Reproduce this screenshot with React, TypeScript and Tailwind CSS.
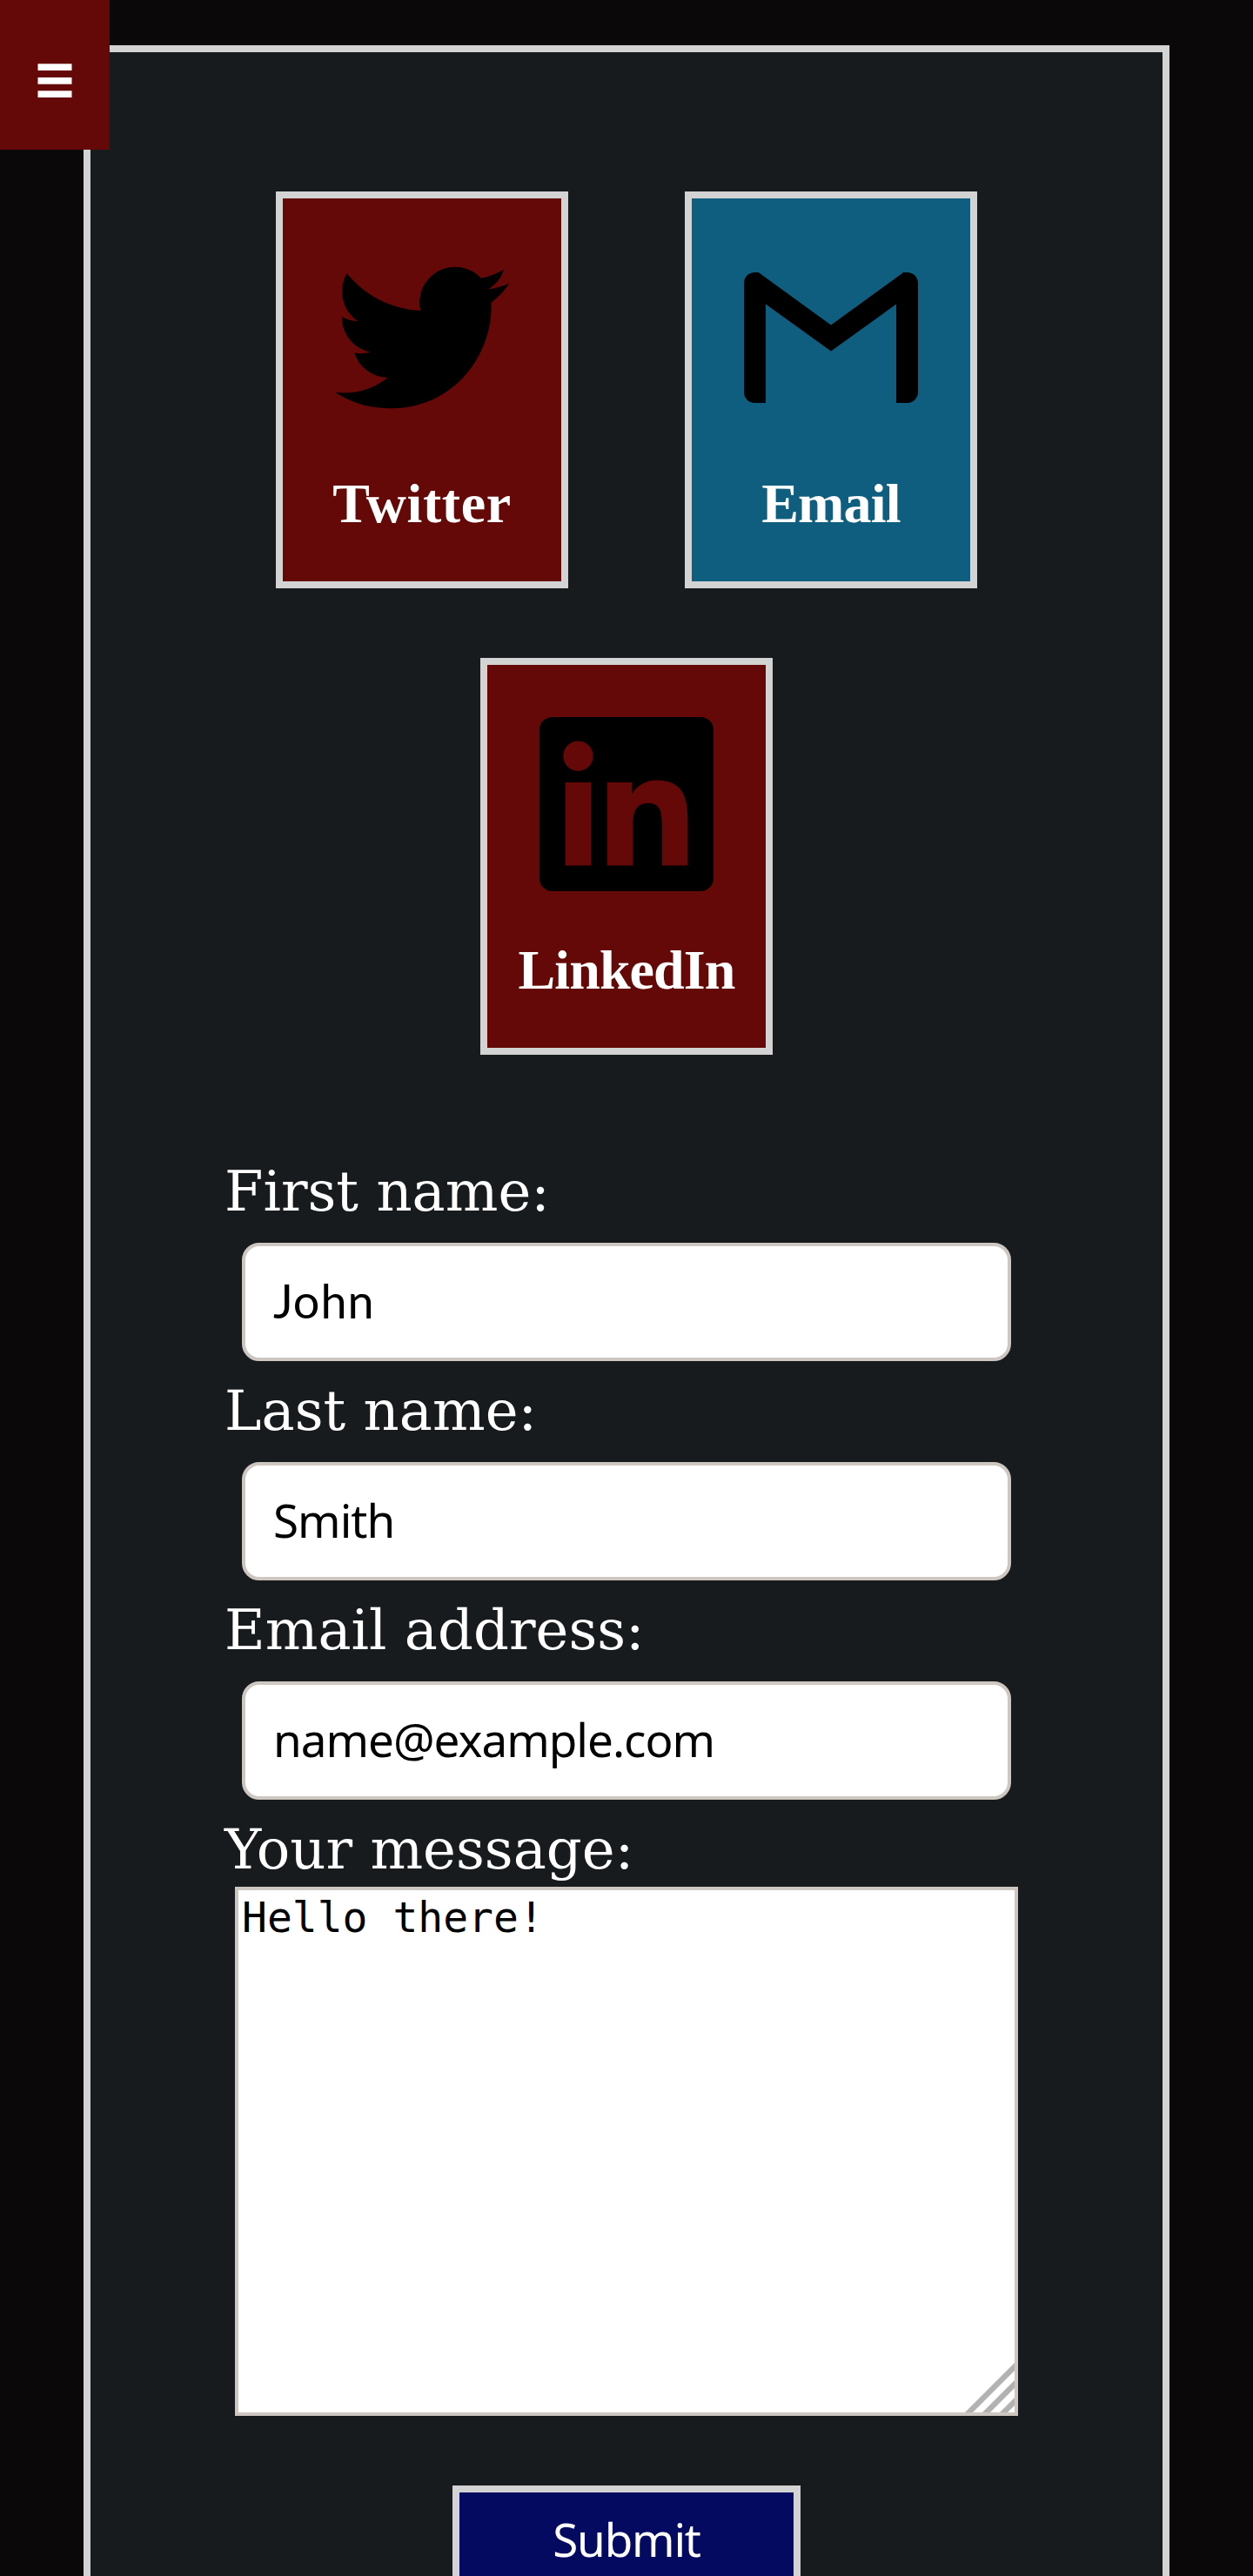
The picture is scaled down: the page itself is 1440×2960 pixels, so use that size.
const TWITTER =
  "M23.953 4.57a10 10 0 01-2.825.775 4.958 4.958 0 002.163-2.723c-.951.555-2.005.959-3.127 1.184a4.92 4.92 0 00-8.384 4.482C7.69 8.095 4.067 6.13 1.64 3.162a4.822 4.822 0 00-.666 2.475c0 1.71.87 3.213 2.188 4.096a4.904 4.904 0 01-2.228-.616v.06a4.923 4.923 0 003.946 4.827 4.996 4.996 0 01-2.212.085 4.936 4.936 0 004.604 3.417 9.867 9.867 0 01-6.102 2.105c-.39 0-.779-.023-1.17-.067a13.995 13.995 0 007.557 2.209c9.053 0 13.998-7.496 13.998-13.985 0-.21 0-.42-.015-.63A9.935 9.935 0 0024 4.59z";
const GMAIL =
  "M24 4.5v15c0 .85-.65 1.5-1.5 1.5H21V7.387l-9 6.463-9-6.463V21H1.5C.649 21 0 20.35 0 19.5v-15c0-.425.162-.8.431-1.068C.7 3.16 1.076 3 1.5 3H2l10 7.25L22 3h.5c.425 0 .8.162 1.069.432.27.268.431.643.431 1.068z";
const LINKEDIN =
  "M20.447 20.452h-3.554v-5.569c0-1.328-.027-3.037-1.852-3.037-1.853 0-2.136 1.445-2.136 2.939v5.667H9.351V9h3.414v1.561h.046c.477-.9 1.637-1.85 3.37-1.85 3.601 0 4.267 2.37 4.267 5.455v6.286zM5.337 7.433c-1.144 0-2.063-.926-2.063-2.065 0-1.138.92-2.063 2.063-2.063 1.14 0 2.064.925 2.064 2.063 0 1.139-.925 2.065-2.064 2.065zm1.782 13.019H3.555V9h3.564v11.452zM22.225 0H1.771C.792 0 0 .774 0 1.729v20.542C0 23.227.792 24 1.771 24h20.451C23.2 24 24 23.227 24 22.271V1.729C24 .774 23.2 0 22.222 0h.003z";

type CardProps = { label: string; path: string; tone: string; tracking: string };

function ContactCard({ label, path, tone, tracking }: CardProps) {
  return (
    <a
      href="#"
      className={`flex h-[456px] w-[336px] flex-col items-center border-8 border-[#d3d3d3] pt-[60px] ${tone}`}
    >
      <svg viewBox="0 0 24 24" className="size-[200px] shrink-0 fill-black">
        <path d={path} />
      </svg>
      <span
        className={`mt-[54px] font-['Liberation_Serif',serif] text-[64px] leading-[74px] font-bold whitespace-nowrap text-white ${tracking}`}
      >
        {label}
      </span>
    </a>
  );
}

type FieldProps = { label: string; value: string; type: string; face: string };

function Field({ label, value, type, face }: FieldProps) {
  return (
    <label className="flex h-[252px] flex-col">
      <span className="h-[74px] font-['DejaVu_Serif',serif] text-[64px] leading-[74px] whitespace-nowrap text-white">
        {label}
      </span>
      <input
        type={type}
        defaultValue={value}
        className={`mt-[22px] ml-5 h-[136px] w-[884px] rounded-[20px] border-4 border-[#cec7c1] bg-white px-8 pb-[3px] text-black outline-none ${face}`}
      />
    </label>
  );
}

export default function App() {
  return (
    <div className="relative h-[2960px] w-[1440px] overflow-hidden bg-[#0a0809] px-24 pt-[52px]">
      <button
        aria-label="Menu"
        className="absolute top-0 left-0 z-10 h-[172px] w-[126px] bg-[#640808]"
      >
        <svg viewBox="0 0 126 172" className="size-full fill-white">
          <rect x="43.5" y="73.3" width="39" height="7.7" />
          <rect x="43.5" y="89" width="39" height="7.7" />
          <rect x="43.5" y="104.3" width="39" height="7.7" />
        </svg>
      </button>

      <main className="h-[3100px] border-8 border-[#d3d3d3] bg-[#171b1d] pt-40">
        <div className="flex flex-wrap justify-center gap-x-[134px] gap-y-20 px-40">
          <ContactCard label="Twitter" path={TWITTER} tone="bg-[#640808]" tracking="tracking-[0.6px]" />
          <ContactCard label="Email" path={GMAIL} tone="bg-[#105e7f]" tracking="tracking-[-0.8px]" />
          <ContactCard label="LinkedIn" path={LINKEDIN} tone="bg-[#640808]" tracking="tracking-[-0.9px]" />
        </div>

        <form className="mt-[120px] ml-[154px] flex w-[924px] flex-col">
          <Field
            label="First name:"
            value="John"
            type="text"
            face="font-['Lato',sans-serif] text-[54px] tracking-[1px]"
          />
          <Field
            label="Last name:"
            value="Smith"
            type="text"
            face="font-['Noto_Sans',sans-serif] text-[53px] tracking-[-1px]"
          />
          <Field
            label="Email address:"
            value="name@example.com"
            type="email"
            face="font-['Noto_Sans',sans-serif] text-[53px] tracking-[-1px]"
          />
          <label className="flex flex-col">
            <span className="h-[74px] font-['DejaVu_Serif',serif] text-[64px] leading-[74px] whitespace-nowrap text-white">
              Your message:
            </span>
            <span className="relative mt-[6px] ml-3 block h-[608px] w-[900px]">
              <textarea
                defaultValue="Hello there!"
                className="block size-full resize-none border-4 border-[#cec7c1] bg-white px-1 pt-[3px] font-['DejaVu_Sans_Mono',monospace] text-[48px] leading-[56px] text-black outline-none"
              />
              <svg viewBox="0 0 60 60" className="absolute right-1 bottom-1 size-[60px] fill-[#b2b2b2]">
                <path d="M3 60L60 3v9L12 60zM23 60L60 23v9L32 60zM43 60L60 43v9L52 60z" />
              </svg>
            </span>
          </label>
          <button
            type="button"
            className="mt-20 ml-[262px] h-[136px] w-[400px] border-8 border-[#d3d3d3] bg-[#030a5f] pb-3 font-['Noto_Sans',sans-serif] text-[53px] leading-[108px] tracking-[-1.2px] text-white"
          >
            Submit
          </button>
        </form>
      </main>
    </div>
  );
}
